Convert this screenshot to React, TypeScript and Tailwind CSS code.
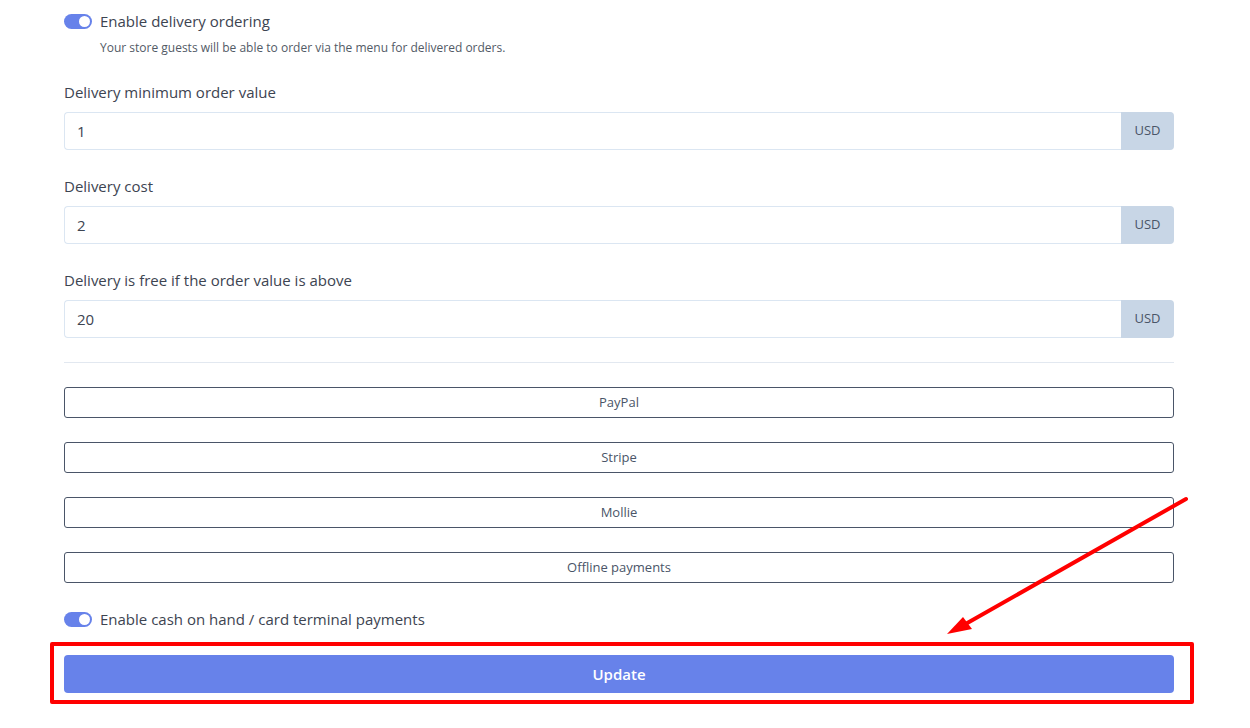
import React from "react";

const Toggle = () => (
  <span className="relative inline-block h-[15px] w-[28px] shrink-0 rounded-full bg-[#6782ea]">
    <span className="absolute right-[2px] top-[2px] h-[11px] w-[11px] rounded-full bg-white" />
  </span>
);

const MoneyField = ({ label, value }: { label: string; value: string }) => (
  <div>
    <div className="text-[15px] leading-[20px] text-[#3d4451]">{label}</div>
    <div className="mt-[10px] flex h-[38px]">
      <div className="flex flex-1 items-center rounded-l-[4px] border border-r-0 border-[#dbe6f2] px-[12px] text-[15px] text-[#3d4451]">
        {value}
      </div>
      <div className="flex w-[53px] items-center justify-center rounded-r-[4px] bg-[#c8d6e6] text-[13px] text-[#4a5568]">USD</div>
    </div>
  </div>
);

const PayButton = ({ label }: { label: string }) => (
  <button className="flex h-[31px] w-full items-center justify-center rounded-[3px] border border-[#4a5568] bg-white text-[13px] text-[#4a5568]">
    {label}
  </button>
);

export default function App() {
  return (
    <div className="relative h-[728px] w-[1250px] bg-white font-['Open_Sans',sans-serif]">
      <div className="px-[64px] pt-[11px] w-[1238px]">
        <div className="flex items-center gap-[8px]">
          <Toggle />
          <span className="text-[15px] leading-[20px] text-[#3d4451]">Enable delivery ordering</span>
        </div>
        <div className="ml-[36px] mt-[9px] text-[12px] leading-[16px] text-[#525a66]">
          Your store guests will be able to order via the menu for delivered orders.
        </div>

        <div className="mt-[26px] flex flex-col gap-[26px]">
          <MoneyField label="Delivery minimum order value" value="1" />
          <MoneyField label="Delivery cost" value="2" />
          <MoneyField label="Delivery is free if the order value is above" value="20" />
        </div>

        <hr className="mt-[24px] border-t border-[#e2e8f0]" />

        <div className="mt-[24px] flex flex-col gap-[24px]">
          <PayButton label="PayPal" />
          <PayButton label="Stripe" />
          <PayButton label="Mollie" />
          <PayButton label="Offline payments" />
        </div>

        <div className="mt-[26px] flex items-center gap-[8px]">
          <Toggle />
          <span className="text-[15px] leading-[20px] text-[#3d4451]">Enable cash on hand / card terminal payments</span>
        </div>

        <button className="mt-[26px] flex h-[38px] w-full items-center justify-center rounded-[4px] bg-[#6782ea] text-[15px] font-semibold text-white">
          Update
        </button>
      </div>

      {/* annotation overlay */}
      <div className="pointer-events-none absolute left-[50px] top-[642px] h-[62px] w-[1144px] rounded-[2px] border-[4px] border-[#ff0000]" />
      <svg className="pointer-events-none absolute left-0 top-0" width="1250" height="728">
        <line x1="1186" y1="499" x2="962" y2="626" stroke="#ff0000" strokeWidth="4" strokeLinecap="round" />
        <polygon points="947,634 963,617 972,629" fill="#ff0000" />
      </svg>
    </div>
  );
}
